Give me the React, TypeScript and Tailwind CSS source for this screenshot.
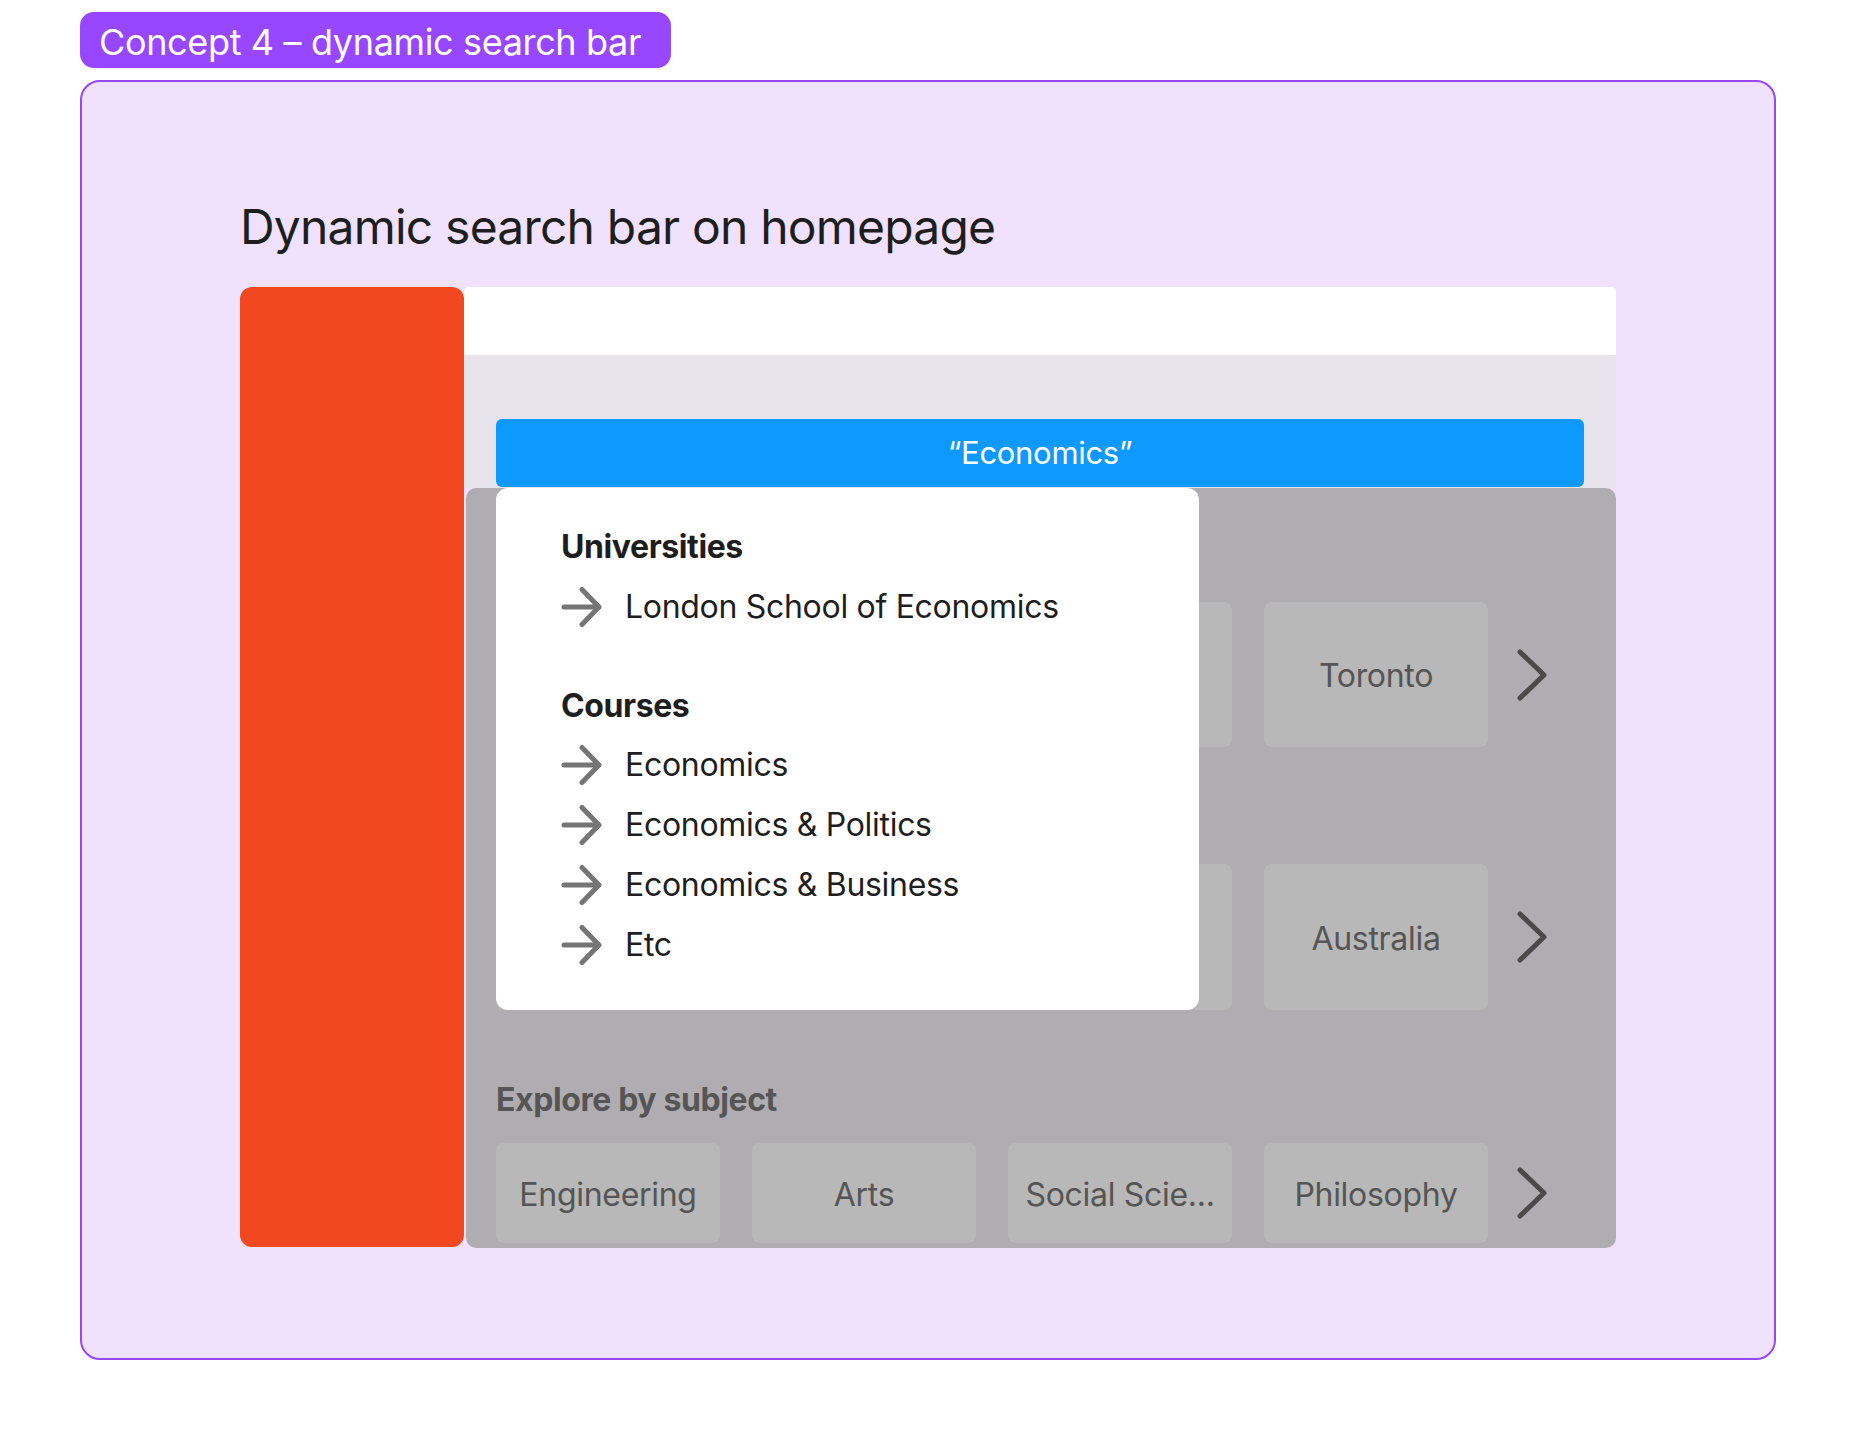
const font = { fontFamily: "Inter, 'Noto Sans', sans-serif" };

function Arrow() {
  return (
    <svg width="42" height="42" viewBox="0 0 42 42" fill="none" className="shrink-0">
      <path
        d="M3 21 H38 M21 3.5 L38 21 L21 38.5"
        stroke="#757575"
        strokeWidth="5"
        strokeLinecap="round"
        strokeLinejoin="round"
      />
    </svg>
  );
}

function Chevron() {
  return (
    <svg width="30" height="52" viewBox="0 0 30 52" fill="none" className="shrink-0">
      <path
        d="M3 3 L27 26 L3 49"
        stroke="#4A4A4A"
        strokeWidth="5"
        strokeLinecap="round"
        strokeLinejoin="round"
      />
    </svg>
  );
}

// cards under the dropdown are left blank, only the visible ones carry a label
function CardRow({ items, height }: { items: string[]; height: string }) {
  return (
    <div className="flex items-center">
      <div className="flex gap-[32px]">
        {items.map((item, i) => (
          <div
            key={i}
            className={`flex w-[224px] items-center justify-center rounded-[8px] bg-[#B8B8B8] pt-[3px] text-[32px] tracking-[-0.3px] text-[#555555] ${height}`}
          >
            {item}
          </div>
        ))}
      </div>
      <div className="ml-[29px]">
        <Chevron />
      </div>
    </div>
  );
}

function ResultRow({ label }: { label: string }) {
  return (
    <div className="flex h-[60px] items-center">
      <Arrow />
      <span className="ml-[22px] text-[32px] leading-[38px] tracking-[-0.3px] text-[#1E1E1E]">{label}</span>
    </div>
  );
}

export default function App() {
  return (
    <div className="h-[1440px] w-[1856px] overflow-hidden bg-white" style={font}>
      {/* frame label */}
      <div className="ml-[80px] mt-[12px] flex h-[56px] w-[591px] items-center rounded-[14px] bg-[#9747FF] pl-[19px] pt-[4px] text-[36px] tracking-[-0.35px] text-white">
        Concept 4 – dynamic search bar
      </div>

      {/* frame */}
      <div className="ml-[80px] mt-[12px] h-[1280px] w-[1696px] rounded-[20px] border-2 border-[#9747FF] bg-[#F0E2FE] pl-[158px] pt-[116px]">
        <h1 className="text-[48px] font-normal leading-[58px] tracking-[-0.8px] text-[#1E1E1E]">
          Dynamic search bar on homepage
        </h1>

        <div className="mt-[31px] flex">
          {/* side nav */}
          <div className="h-[960px] w-[224px] rounded-[12px] bg-[#F24822]" />

          {/* page */}
          <div className="relative w-[1152px]">
            <div className="h-[68px] rounded-t-[5px] bg-white" />
            <div className="h-[133px] bg-[#E7E4EC] pl-[32px] pt-[64px]">
              <div className="flex h-[68px] w-[1088px] items-center justify-center rounded-[6px] bg-[#0D99FF] text-[31px] tracking-[-0.3px] text-white">
                “Economics”
              </div>
            </div>

            <div className="ml-[2px] h-[760px] overflow-hidden rounded-[10px] bg-[#AFADB1] pl-[30px] pt-[52px]">
              <div className="h-[36px]" />
              <div className="mt-[26px]">
                <CardRow items={["", "", "", "Toronto"]} height="h-[145px]" />
              </div>
              <div className="mt-[55px] h-[36px]" />
              <div className="mt-[26px]">
                <CardRow items={["", "", "", "Australia"]} height="h-[146px]" />
              </div>
              <div className="mt-[71px] h-[36px] pt-[1px] text-[32px] font-bold leading-[36px] tracking-[-0.4px] text-[#555555]">
                Explore by subject
              </div>
              <div className="mt-[26px]">
                <CardRow items={["Engineering", "Arts", "Social Scie...", "Philosophy"]} height="h-[100px]" />
              </div>
            </div>

            {/* search dropdown */}
            <div className="absolute left-[32px] top-[201px] h-[522px] w-[703px] rounded-[12px] bg-white pl-[65px] pt-[40px]">
              <div className="text-[32px] font-bold leading-[38px] tracking-[-0.4px] text-[#1E1E1E]">Universities</div>
              <div className="mt-[11px]">
                <ResultRow label="London School of Economics" />
              </div>
              <div className="mt-[50px] text-[32px] font-bold leading-[38px] tracking-[-0.4px] text-[#1E1E1E]">Courses</div>
              <div className="mt-[10px]">
                <ResultRow label="Economics" />
                <ResultRow label="Economics & Politics" />
                <ResultRow label="Economics & Business" />
                <ResultRow label="Etc" />
              </div>
            </div>
          </div>
        </div>
      </div>
    </div>
  );
}
